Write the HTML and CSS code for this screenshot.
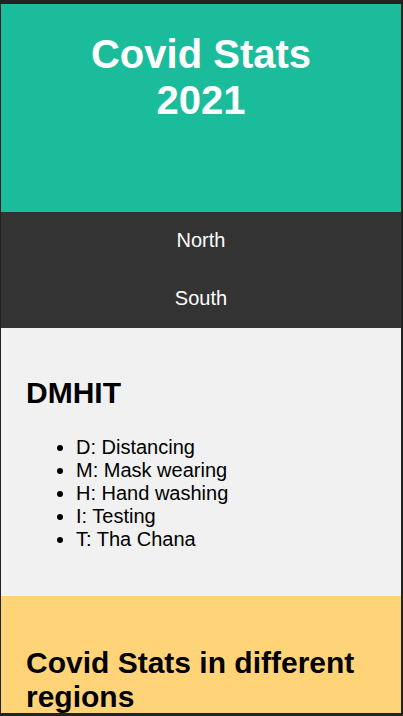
FILE: index.html
```html
<!DOCTYPE html>
<html lang="en">
<head>
<meta charset="utf-8">
<title>Covid Stats 2021</title>
<link rel="stylesheet" href="styles.css">
</head>
<body>
<div class="frame">
  <header class="header">
    <h1 class="title">Covid Stats<br>2021</h1>
  </header>
  <nav class="nav">
    <a class="nav-link" href="#north">North</a>
    <a class="nav-link" href="#south">South</a>
  </nav>
  <section class="main">
    <h2 class="section-title">DMHIT</h2>
    <ul class="list">
      <li>D: Distancing</li>
      <li>M: Mask wearing</li>
      <li>H: Hand washing</li>
      <li>I: Testing</li>
      <li>T: Tha Chana</li>
    </ul>
  </section>
  <section class="stats">
    <h2 class="section-title">Covid Stats in different regions</h2>
  </section>
</div>
</body>
</html>
```
FILE: styles.css
```css
html, body {
  margin: 0;
  padding: 0;
  height: 100%;
}
body {
  background: #222222;
  font-family: "Liberation Sans", Arial, sans-serif;
  font-size: 20px;
  line-height: 23px;
  color: #000;
}
.frame {
  box-sizing: border-box;
  height: 716px;
  border-style: solid;
  border-color: #222222;
  border-width: 4px 2px 3px 1px;
  overflow: hidden;
  display: flex;
  flex-direction: column;
}
.header {
  flex: 0 0 auto;
  box-sizing: border-box;
  height: 208px;
  padding-top: 27px;
  background: #1abc9c;
  text-align: center;
}
.title {
  margin: 0;
  font-size: 40px;
  line-height: 46px;
  font-weight: bold;
  color: #ffffff;
}
.nav {
  flex: 0 0 auto;
  background: #333333;
  display: flex;
  flex-direction: column;
}
.nav-link {
  display: block;
  padding: 17px 0 18px;
  color: #ffffff;
  text-decoration: none;
  text-align: center;
}
.main {
  flex: 0 0 auto;
  box-sizing: border-box;
  height: 268px;
  background: #f1f1f1;
  padding: 23px 25px 24px;
}
.section-title {
  margin: 25px 0;
  font-size: 30px;
  line-height: 34px;
  font-weight: bold;
}
.main .section-title {
  margin-bottom: 26px;
}
.list {
  margin: 20px 0;
  padding-left: 50px;
}
.stats {
  flex: 1 0 auto;
  background: #ffd479;
  padding: 25px 25px;
}
```
